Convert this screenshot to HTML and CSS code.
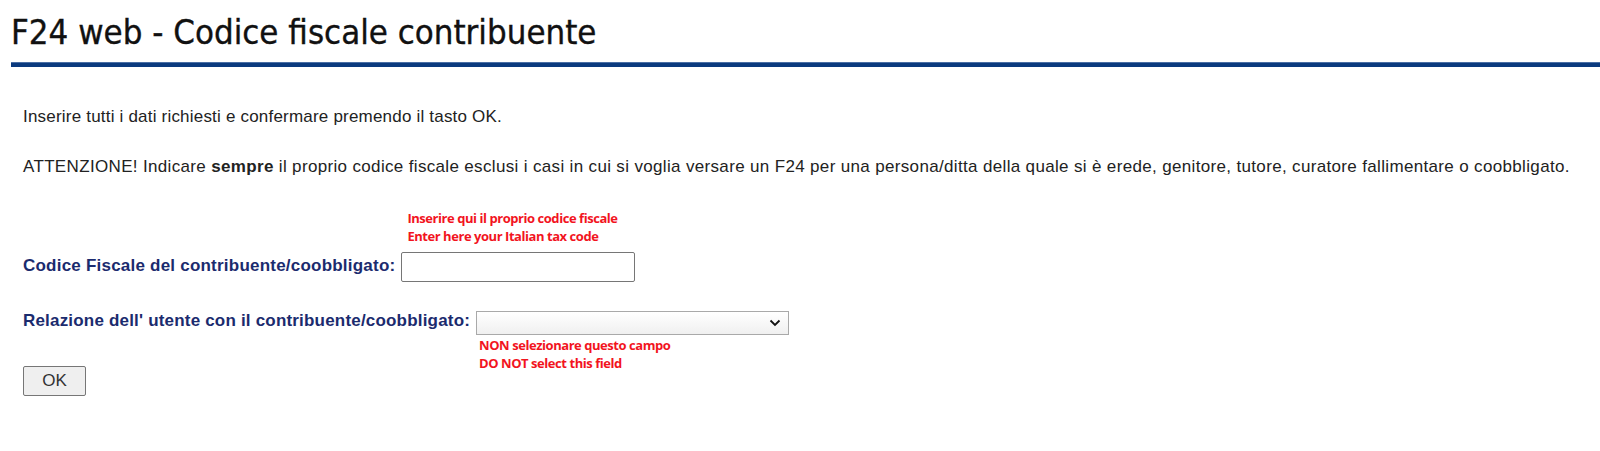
FILE: index.html
```html
<!DOCTYPE html>
<html lang="it">
<head>
<meta charset="utf-8">
<title>F24 web - Codice fiscale contribuente</title>
<link rel="stylesheet" href="styles.css">
</head>
<body>
<header class="page-header">
  <h1 class="page-title">F24 web - Codice fiscale contribuente</h1>
  <div class="title-rule"></div>
</header>
<main class="content">
  <p class="intro">Inserire tutti i dati richiesti e confermare premendo il tasto OK.</p>
  <p class="warning">ATTENZIONE! Indicare <b>sempre</b> il proprio codice fiscale esclusi i casi in cui si voglia versare un F24 per una persona/ditta della quale si è erede, genitore, tutore, curatore fallimentare o coobbligato.</p>

  <div class="field field-cf">
    <label class="field-label" for="cf">Codice Fiscale del contribuente/coobbligato:</label>
    <div class="field-control">
      <div class="note note-above">Inserire qui il proprio codice fiscale<br>Enter here your Italian tax code</div>
      <input class="text-input" id="cf" type="text">
    </div>
  </div>

  <div class="field field-rel">
    <label class="field-label" for="rel">Relazione dell' utente con il contribuente/coobbligato:</label>
    <div class="field-control select-wrap">
      <select class="select-input" id="rel"><option></option></select>
      <svg class="chevron" width="12" height="8" viewBox="0 0 12 8"><path d="M1.5 1.5 L6 6 L10.5 1.5" fill="none" stroke="#111" stroke-width="1.8"/></svg>
      <div class="note note-below">NON selezionare questo campo<br>DO NOT select this field</div>
    </div>
  </div>

  <button class="ok-button" type="button">OK</button>
</main>
</body>
</html>
```
FILE: styles.css
```css
html, body {
  margin: 0;
  padding: 0;
  background: #ffffff;
}

body {
  font-family: "Liberation Sans", Arial, sans-serif;
  color: #222222;
}

.page-header {
  padding: 12px 0 0 11px;
}

.page-title {
  margin: 0;
  font-family: "Liberation Sans Narrow", "DejaVu Sans Condensed", sans-serif;
  font-weight: normal;
  font-size: 34.5px;
  line-height: 40px;
  color: #111111;
  -webkit-text-stroke: 0.35px #111111;
}

.title-rule {
  margin-top: 10px;
  height: 4px;
  background: #0b3a7e;
  border-top: 1px solid #4a6fa5;
}

.content {
  padding: 0 0 0 23px;
}

.intro,
.warning {
  margin: 0;
  font-size: 17px;
  line-height: 20px;
}

.intro {
  margin-top: 40px;
  letter-spacing: 0.2px;
}

.warning {
  margin-top: 30px;
  letter-spacing: 0.34px;
}

.field {
  display: flex;
  gap: 6px;
}

.field-cf {
  margin-top: 32px;
  align-items: flex-end;
}

.field-rel {
  margin-top: 29px;
  align-items: flex-start;
}

.field-label {
  font-weight: bold;
  font-size: 17px;
  letter-spacing: 0.22px;
  line-height: 20px;
  color: #1b2b6e;
}

.field-rel .field-label {
  letter-spacing: 0.19px;
}

.field-cf .field-label {
  padding-bottom: 6px;
}

.field-control {
  display: flex;
  flex-direction: column;
}

.note {
  font-family: "Open Sans", sans-serif;
  font-weight: 700;
  font-size: 13px;
  letter-spacing: -0.45px;
  line-height: 18px;
  color: #f2141e;
}

.note-above {
  padding-left: 6px;
  margin-bottom: 7px;
}

.text-input {
  box-sizing: border-box;
  width: 234px;
  height: 30px;
  margin: 0;
  border: 1px solid #767676;
  border-radius: 2px;
  background: #ffffff;
}

.select-wrap {
  position: relative;
}

.select-input {
  box-sizing: border-box;
  width: 313px;
  height: 24px;
  margin: 0;
  border: 1px solid #a9a9a9;
  border-radius: 0;
  background: linear-gradient(#ffffff, #f0f0f0);
  appearance: none;
  -webkit-appearance: none;
}

.chevron {
  position: absolute;
  right: 8px;
  top: 8px;
}

.note-below {
  position: absolute;
  top: 25px;
  left: 3px;
  white-space: nowrap;
}

.ok-button {
  display: block;
  box-sizing: border-box;
  margin-top: 31px;
  width: 63px;
  height: 30px;
  padding: 0;
  border: 1px solid #767676;
  border-radius: 2px;
  background: #efefef;
  font-family: "Liberation Sans", Arial, sans-serif;
  font-size: 17px;
  color: #333333;
}
```
